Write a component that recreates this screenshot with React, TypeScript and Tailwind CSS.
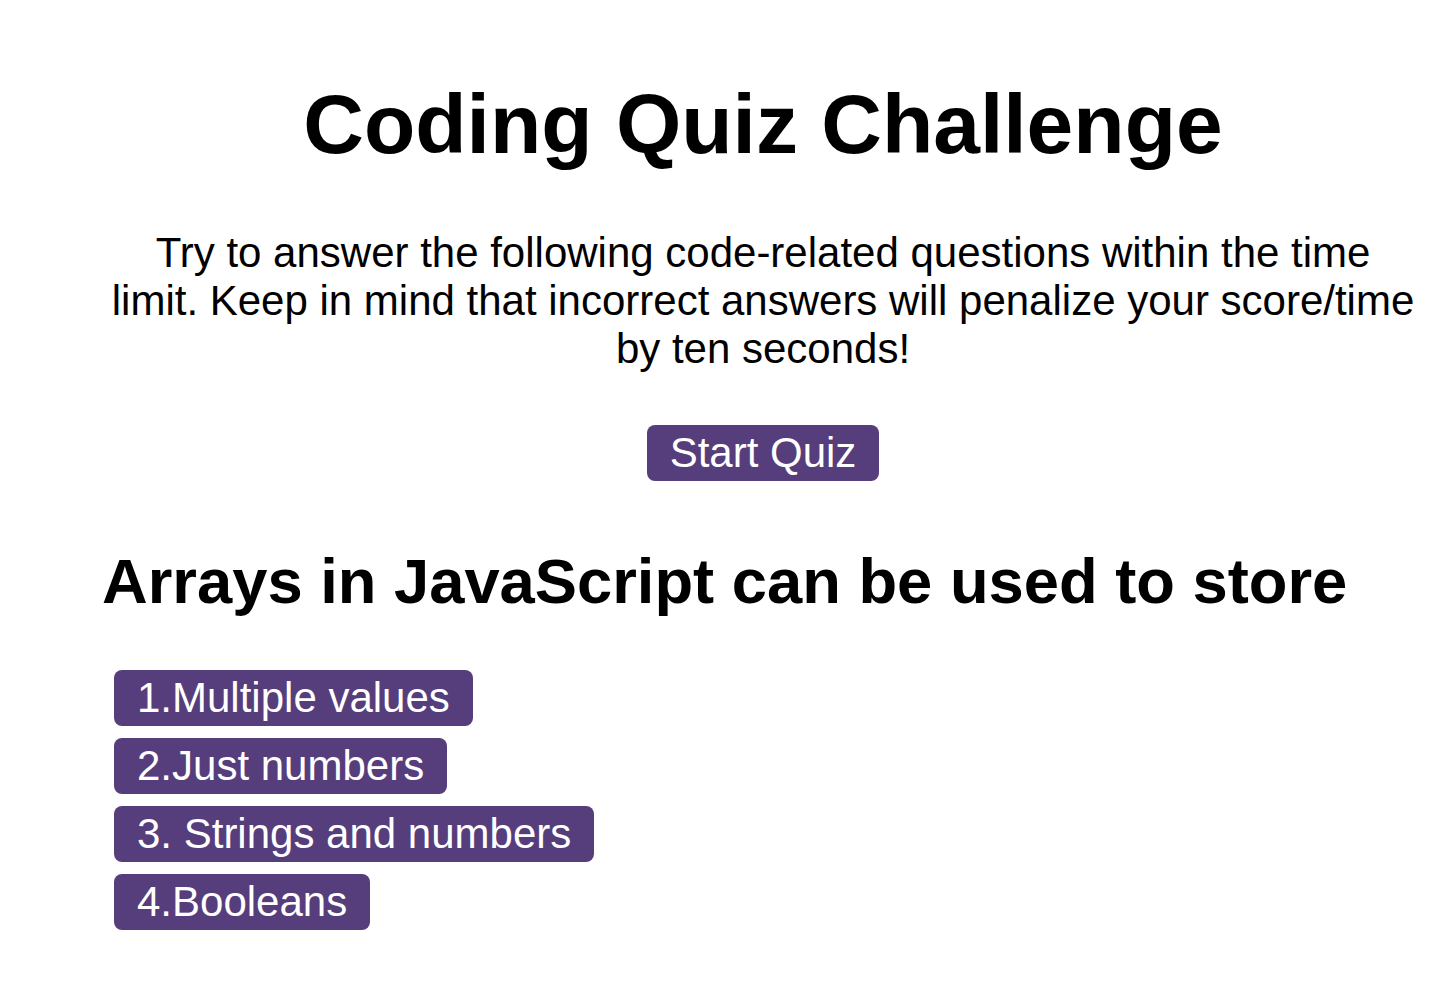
import React from "react";

const answers = [
  "1.Multiple values",
  "2.Just numbers",
  "3. Strings and numbers",
  "4.Booleans",
];

const App = () => {
  return (
    <div className="min-h-screen bg-white text-black font-['Liberation_Sans',Arial,sans-serif]">
      <main className="ml-[90px] pt-[76px]">
        <header className="text-center">
          <h1 className="text-[84px] font-bold leading-[normal]">
            Coding Quiz Challenge
          </h1>
          <p className="mx-auto mt-[56px] w-[1305px] text-[42px] leading-[normal]">
            Try to answer the following code-related questions within the time
            limit. Keep in mind that incorrect answers will penalize your
            score/time by ten seconds!
          </p>
          <button className="mt-[52px] rounded-lg bg-[#563d7c] px-[23px] py-1 text-[42px] leading-[normal] text-white">
            Start Quiz
          </button>
        </header>

        <section className="mt-[64px]">
          <h2 className="ml-[12px] text-[63.3px] font-bold leading-[72px]">
            Arrays in JavaScript can be used to store
          </h2>
          <div className="ml-[24px] mt-[53px] flex flex-col items-start gap-3">
            {answers.map((a) => (
              <button
                key={a}
                className="rounded-lg bg-[#563d7c] px-[23px] py-1 text-[42px] leading-[normal] text-white"
              >
                {a}
              </button>
            ))}
          </div>
        </section>
      </main>
    </div>
  );
};

export default App;
